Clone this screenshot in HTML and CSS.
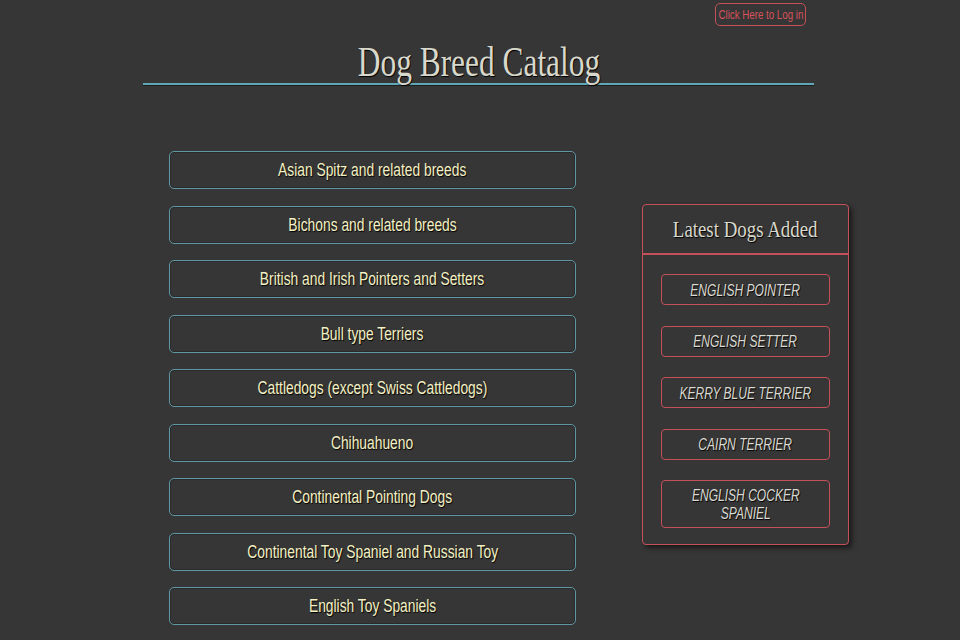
FILE: index.html
```html
<!DOCTYPE html>
<html>
<head>
<meta charset="utf-8">
<title>Dog Breed Catalog</title>
<link rel="stylesheet" href="styles.css">
</head>
<body>
<div class="topbar">
  <a class="login" href="#"><span class="narrow">Click Here to Log in</span></a>
</div>
<header class="header">
  <h1 class="title"><span class="narrow">Dog Breed Catalog</span></h1>
</header>
<main class="main">
  <section class="groups">
    <a class="group" href="#"><span class="narrow">Asian Spitz and related breeds</span></a>
    <a class="group" href="#"><span class="narrow">Bichons and related breeds</span></a>
    <a class="group" href="#"><span class="narrow">British and Irish Pointers and Setters</span></a>
    <a class="group" href="#"><span class="narrow">Bull type Terriers</span></a>
    <a class="group" href="#"><span class="narrow">Cattledogs (except Swiss Cattledogs)</span></a>
    <a class="group" href="#"><span class="narrow">Chihuahueno</span></a>
    <a class="group" href="#"><span class="narrow">Continental Pointing Dogs</span></a>
    <a class="group" href="#"><span class="narrow">Continental Toy Spaniel and Russian Toy</span></a>
    <a class="group" href="#"><span class="narrow">English Toy Spaniels</span></a>
  </section>
  <aside class="latest">
    <h2 class="latest-title"><span class="narrow">Latest Dogs Added</span></h2>
    <div class="latest-list">
      <a class="dog" href="#"><span class="narrow">ENGLISH POINTER</span></a>
      <a class="dog" href="#"><span class="narrow">ENGLISH SETTER</span></a>
      <a class="dog" href="#"><span class="narrow">KERRY BLUE TERRIER</span></a>
      <a class="dog" href="#"><span class="narrow">CAIRN TERRIER</span></a>
      <a class="dog" href="#"><span class="narrow">ENGLISH COCKER<br>SPANIEL</span></a>
    </div>
  </aside>
</main>
</body>
</html>
```
FILE: styles.css
```css
html, body {
  margin: 0;
  padding: 0;
  background: #363636;
  font-family: "Liberation Sans", Arial, sans-serif;
}
a { text-decoration: none; }

.narrow {
  display: inline-block;
  white-space: nowrap;
  text-align: center;
  flex: none;
  transform-origin: center center;
}

.topbar {
  display: flex;
  justify-content: flex-end;
  padding: 3px 154px 0 0;
  height: 24px;
}
.login {
  display: flex;
  justify-content: center;
  align-items: center;
  box-sizing: border-box;
  width: 91px;
  height: 23px;
  border: 1px solid #c4505a;
  border-radius: 5px;
  color: #d8525c;
  font-size: 13.5px;
  line-height: 15px;
}
.login .narrow { transform: scaleX(0.72); }

.header {
  width: 671px;
  margin-left: 143px;
  border-bottom: 2px solid #5fa7b5;
  box-shadow: 0 1px 0 #1e1e1e;
}
.title {
  margin: 0;
  padding: 14px 0 0;
  height: 42px;
  line-height: 42px;
  text-align: center;
  font-family: "Liberation Serif", "Times New Roman", serif;
  font-weight: normal;
  font-size: 43px;
  color: #d8d8cc;
  text-shadow: 1px 1px 1px #000;
}
.title .narrow { transform: scaleX(0.73); }

.main {
  display: flex;
  align-items: flex-start;
  padding: 66px 0 0 169px;
}
.groups {
  display: flex;
  flex-direction: column;
  gap: 16.5px;
  width: 407px;
}
.group {
  display: flex;
  justify-content: center;
  align-items: center;
  box-sizing: border-box;
  height: 38px;
  border: 1px solid #5f97a4;
  border-radius: 5px;
  box-shadow: inset 0 0 0 1px #2a2a2a;
  color: #f4f1c4;
  font-size: 17.5px;
  line-height: 20px;
  text-shadow: 1px 1px 1px #000;
}
.group .narrow { transform: scaleX(0.79); }

.latest {
  box-sizing: border-box;
  width: 207px;
  margin: 53px 0 0 66px;
  border: 1px solid #c4505a;
  border-radius: 4px;
  box-shadow: 3px 3px 5px #1a1a1a;
  padding-bottom: 16px;
}
.latest-title {
  margin: 0;
  height: 48px;
  line-height: 50px;
  text-align: center;
  font-family: "Liberation Serif", "Times New Roman", serif;
  font-weight: normal;
  font-size: 23px;
  color: #d8d8cc;
  text-shadow: 1px 1px 1px #000;
  border-bottom: 2px solid #c4505a;
}
.latest-title .narrow { transform: scaleX(0.82); }
.latest-list {
  display: flex;
  flex-direction: column;
  gap: 20.5px;
  padding: 19px 18px 0 18px;
}
.dog {
  display: flex;
  justify-content: center;
  align-items: center;
  box-sizing: border-box;
  min-height: 31px;
  padding: 5px 4px;
  line-height: 18px;
  border: 1px solid #c4505a;
  border-radius: 4px;
  color: #dadad2;
  font-style: italic;
  font-size: 16.5px;
  text-shadow: 1px 1px 1px #000;
}
.dog .narrow { transform: scaleX(0.73); }
```
